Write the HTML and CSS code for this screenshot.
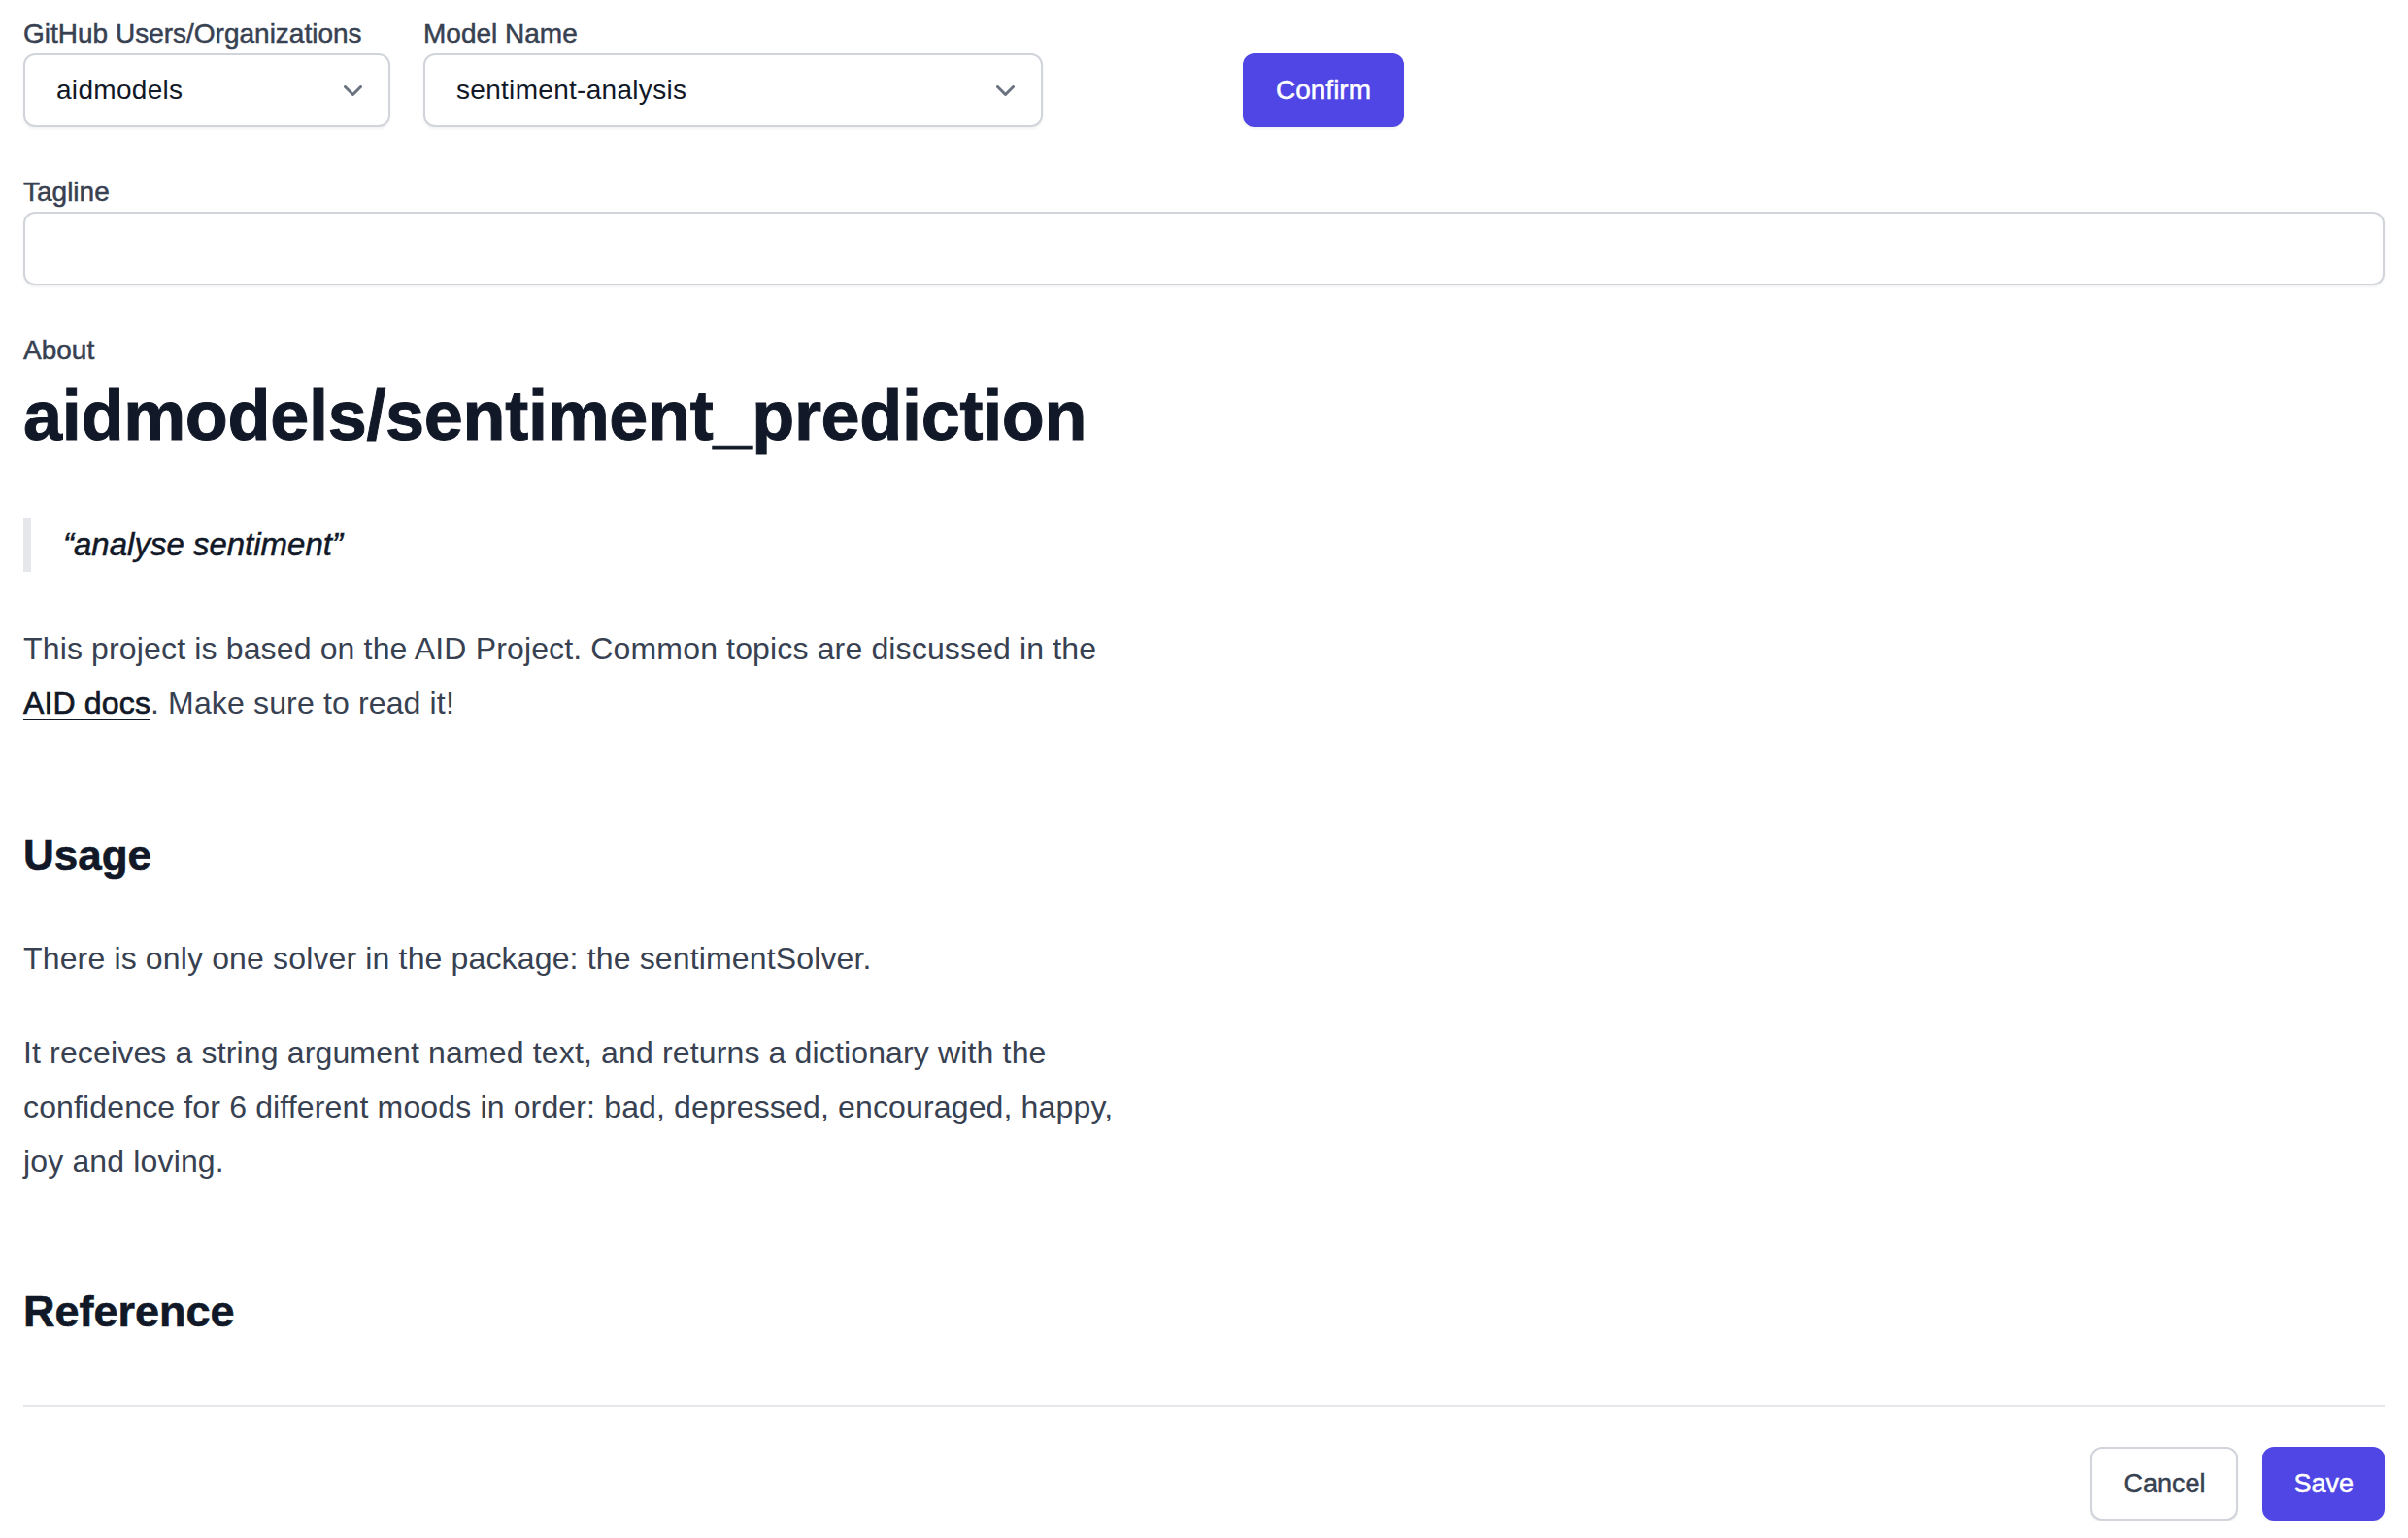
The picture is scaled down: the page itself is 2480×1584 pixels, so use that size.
FILE: index.html
```html
<!DOCTYPE html>
<html lang="en">
<head>
<meta charset="utf-8">
<title>Model settings</title>
<link rel="stylesheet" href="styles.css">
</head>
<body>
<div class="page">
  <form class="form">
    <div class="row">
      <div class="field field-user">
        <label class="label">GitHub Users/Organizations</label>
        <div class="select">
          <span>aidmodels</span>
          <svg class="chevron" width="19" height="11" viewBox="0 0 19 11"><polyline points="1.5,1.5 9.5,9.5 17.5,1.5" fill="none" stroke="#6b7280" stroke-width="3" stroke-linecap="round" stroke-linejoin="round"/></svg>
        </div>
      </div>
      <div class="field field-model">
        <label class="label">Model Name</label>
        <div class="select">
          <span>sentiment-analysis</span>
          <svg class="chevron" width="19" height="11" viewBox="0 0 19 11"><polyline points="1.5,1.5 9.5,9.5 17.5,1.5" fill="none" stroke="#6b7280" stroke-width="3" stroke-linecap="round" stroke-linejoin="round"/></svg>
        </div>
      </div>
      <button type="button" class="btn btn-primary btn-confirm">Confirm</button>
    </div>

    <div class="field field-tagline">
      <label class="label">Tagline</label>
      <div class="input"></div>
    </div>

    <div class="about">
      <div class="label">About</div>
      <article class="prose">
        <h1 class="title">aidmodels/sentiment_prediction</h1>
        <blockquote class="quote"><p>“analyse sentiment”</p></blockquote>
        <p class="intro">This project is based on the AID Project. Common topics are discussed in the <a class="link" href="#">AID docs</a>. Make sure to read it!</p>
        <h2 class="section section-usage">Usage</h2>
        <p class="para-first">There is only one solver in the package: the sentimentSolver.</p>
        <p class="para-next">It receives a string argument named text, and returns a dictionary with the confidence for 6 different moods in order: bad, depressed, encouraged, happy, joy and loving.</p>
        <h2 class="section section-ref">Reference</h2>
      </article>
    </div>
  </form>

  <footer class="footer">
    <button type="button" class="btn btn-secondary">Cancel</button>
    <button type="button" class="btn btn-primary">Save</button>
  </footer>
</div>
</body>
</html>
```

FILE: styles.css
```css
html, body {
  margin: 0;
  padding: 0;
  background: #ffffff;
}

body {
  font-family: "Liberation Sans", Arial, sans-serif;
  color: #374151;
}

.page {
  padding: 15px 24px 0 24px;
}

.form {
  margin: 0;
}

.row {
  display: flex;
  align-items: flex-end;
}

.field-user {
  width: 378px;
}

.field-model {
  width: 638px;
  margin-left: 34px;
}

.label {
  display: block;
  font-size: 28px;
  line-height: 40px;
  color: #374151;
  -webkit-text-stroke: 0.5px #374151;
}

.select,
.input {
  box-sizing: border-box;
  height: 76px;
  border: 2px solid #d1d5db;
  border-radius: 12px;
  background: #ffffff;
  box-shadow: 0 2px 3px rgba(0, 0, 0, 0.05);
}

.select {
  display: flex;
  align-items: center;
  justify-content: space-between;
  padding: 0 27px 0 32px;
  font-size: 28px;
  letter-spacing: 0.3px;
  color: #111827;
}

.chevron {
  display: block;
  flex: none;
}

.btn {
  box-sizing: border-box;
  height: 76px;
  border-radius: 12px;
  font-family: "Liberation Sans", Arial, sans-serif;
  font-size: 28px;
  cursor: pointer;
  box-shadow: 0 2px 3px rgba(0, 0, 0, 0.05);
}

.btn-primary {
  background: #4f46e5;
  color: #ffffff;
  border: none;
  -webkit-text-stroke: 0.5px #ffffff;
}

.btn-secondary {
  background: #ffffff;
  color: #374151;
  border: 2px solid #d1d5db;
  -webkit-text-stroke: 0.5px #374151;
}

.btn-confirm {
  width: 166px;
  margin-left: 206px;
  padding: 0;
}

.field-tagline {
  margin-top: 47px;
}

.about {
  margin-top: 47px;
}

.prose {
  display: block;
}

.title {
  margin: 7px 0 0 0;
  font-size: 72px;
  line-height: 80px;
  font-weight: 700;
  letter-spacing: -0.3px;
  color: #111827;
  -webkit-text-stroke: 1px #111827;
}

.quote {
  margin: 65px 0 0 0;
  padding-left: 33px;
  border-left: 8px solid #e5e7eb;
}

.quote p {
  margin: 0;
  font-size: 33px;
  line-height: 56px;
  font-style: italic;
  color: #111827;
  -webkit-text-stroke: 0.5px #111827;
}

.prose p {
  max-width: 1140px;
}

.intro,
.para-first,
.para-next {
  margin: 0;
  font-size: 32px;
  line-height: 56px;
  letter-spacing: 0.15px;
  color: #374151;
}

.intro {
  margin-top: 51px;
}

.link {
  color: #111827;
  text-decoration: underline;
  text-decoration-thickness: 2px;
  text-underline-offset: 5px;
  -webkit-text-stroke: 0.7px #111827;
}

.section {
  margin: 0;
  font-size: 44px;
  line-height: 56px;
  font-weight: 700;
  color: #111827;
  -webkit-text-stroke: 0.6px #111827;
}

.section-usage {
  margin-top: 101px;
}

.para-first {
  margin-top: 50px;
}

.para-next {
  margin-top: 41px;
}

.section-ref {
  margin-top: 99px;
  font-size: 45px;
}

.footer {
  margin-top: 68px;
  border-top: 2px solid #e5e7eb;
  padding-top: 41px;
  display: flex;
  justify-content: flex-end;
  gap: 25px;
}

.footer .btn {
  font-size: 27px;
  padding: 0 32px;
}
```
